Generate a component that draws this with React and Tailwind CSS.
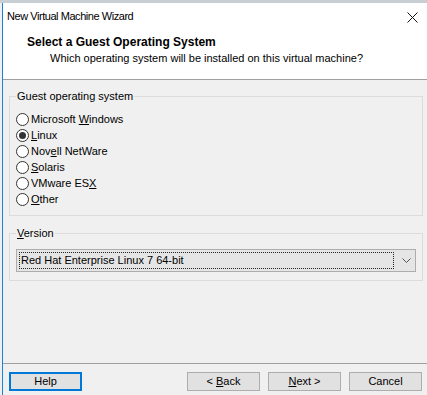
import React from 'react';

function Radio({ label, checked }) {
    return (
        <div className="flex items-center h-[16px]">
            <span className="w-[13px] h-[13px] rounded-full border border-[#333333] bg-white flex items-center justify-center">
                {checked && <span className="w-[7px] h-[7px] rounded-full bg-[#333333]" />}
            </span>
            <span className="ml-[2px]">{label}</span>
        </div>
    );
}

function Btn({ children, focused }) {
    return (
        <button
            className={
                focused
                    ? 'w-[73px] h-[19px] bg-[#e1e1e1] border-2 border-[#0078d7] text-[#000] leading-none'
                    : 'w-[73px] h-[19px] bg-[#e1e1e1] border border-[#adadad] text-[#000] leading-none'
            }
        >
            {children}
        </button>
    );
}

export default function App() {
    return (
        <div
            className="w-[427px] h-[395px] overflow-hidden bg-[#f0f0f0] flex flex-col text-[11px] text-black"
            style={{ fontFamily: '"Liberation Sans", Arial, sans-serif' }}
        >
            {/* strip of whatever is behind the window */}
            <div className="h-[3px] bg-[#c9ced3] shrink-0" />
            <div className="flex flex-1">
                <div className="w-[2px] bg-[#eef0f2]" />
                <div className="flex-1 border-l border-[#1883d7] flex flex-col">
                    {/* title bar + header */}
                    <div className="bg-white h-[77px] border-b border-[#a0a0a0] flex flex-col">
                        <div className="h-[26px] flex items-center justify-between pl-[4px] pr-[9px] text-[11px] tracking-[-0.45px]">
                            <span>New Virtual Machine Wizard</span>
                            <svg width="11" height="11" viewBox="0 0 11 11" className="mt-[2px]">
                                <path d="M0.5 0.5 L10.5 10.5 M10.5 0.5 L0.5 10.5" stroke="#111" strokeWidth="1" />
                            </svg>
                        </div>
                        <div className="pl-[24px] mt-[6px] font-bold text-[12px] leading-[15px]">Select a Guest Operating System</div>
                        <div className="pl-[47px] leading-[15px] mt-[1px]">Which operating system will be installed on this virtual machine?</div>
                    </div>

                    {/* body */}
                    <div className="flex-1 flex flex-col px-[6px] pr-[4px] pt-[9px]">
                        <fieldset className="border border-[#dcdcdc] pl-[6px] pb-[8px] pt-[8px]">
                            <legend className="px-[1px] leading-[14px]">Guest operating system</legend>
                            <div className="flex flex-col">
                                <Radio label={<>Microsoft <u>W</u>indows</>} />
                                <Radio label={<><u>L</u>inux</>} checked />
                                <Radio label={<>Nov<u>e</u>ll NetWare</>} />
                                <Radio label={<><u>S</u>olaris</>} />
                                <Radio label={<>VMware ES<u>X</u></>} />
                                <Radio label={<><u>O</u>ther</>} />
                            </div>
                        </fieldset>

                        <fieldset className="mt-[10px] border border-[#dcdcdc] px-[6px] pt-[9px] pb-[8px]">
                            <legend className="px-[1px] leading-[14px]"><u>V</u>ersion</legend>
                            <div className="h-[23px] bg-[#e5e5e5] border border-[#adadad] flex items-center pl-[2px] pr-[4px]">
                                <div className="flex-1 h-[17px] border border-dotted border-[#222] flex items-center pl-[1px]">
                                    Red Hat Enterprise Linux 7 64-bit
                                </div>
                                <svg width="9" height="5" viewBox="0 0 9 5" className="ml-[8px]">
                                    <path d="M0.5 0.5 L4.5 4.5 L8.5 0.5" stroke="#555" strokeWidth="1" fill="none" />
                                </svg>
                            </div>
                        </fieldset>
                    </div>

                    {/* footer */}
                    <div className="h-[32px] border-t border-[#a0a0a0] flex items-start pt-[8px] pl-[6px] pr-[5px]">
                        <Btn focused>Help</Btn>
                        <div className="flex-1" />
                        <div className="flex gap-[8px]">
                            <Btn>&lt; <u>B</u>ack</Btn>
                            <Btn><u>N</u>ext &gt;</Btn>
                            <Btn>Cancel</Btn>
                        </div>
                    </div>
                </div>
            </div>
        </div>
    );
}
